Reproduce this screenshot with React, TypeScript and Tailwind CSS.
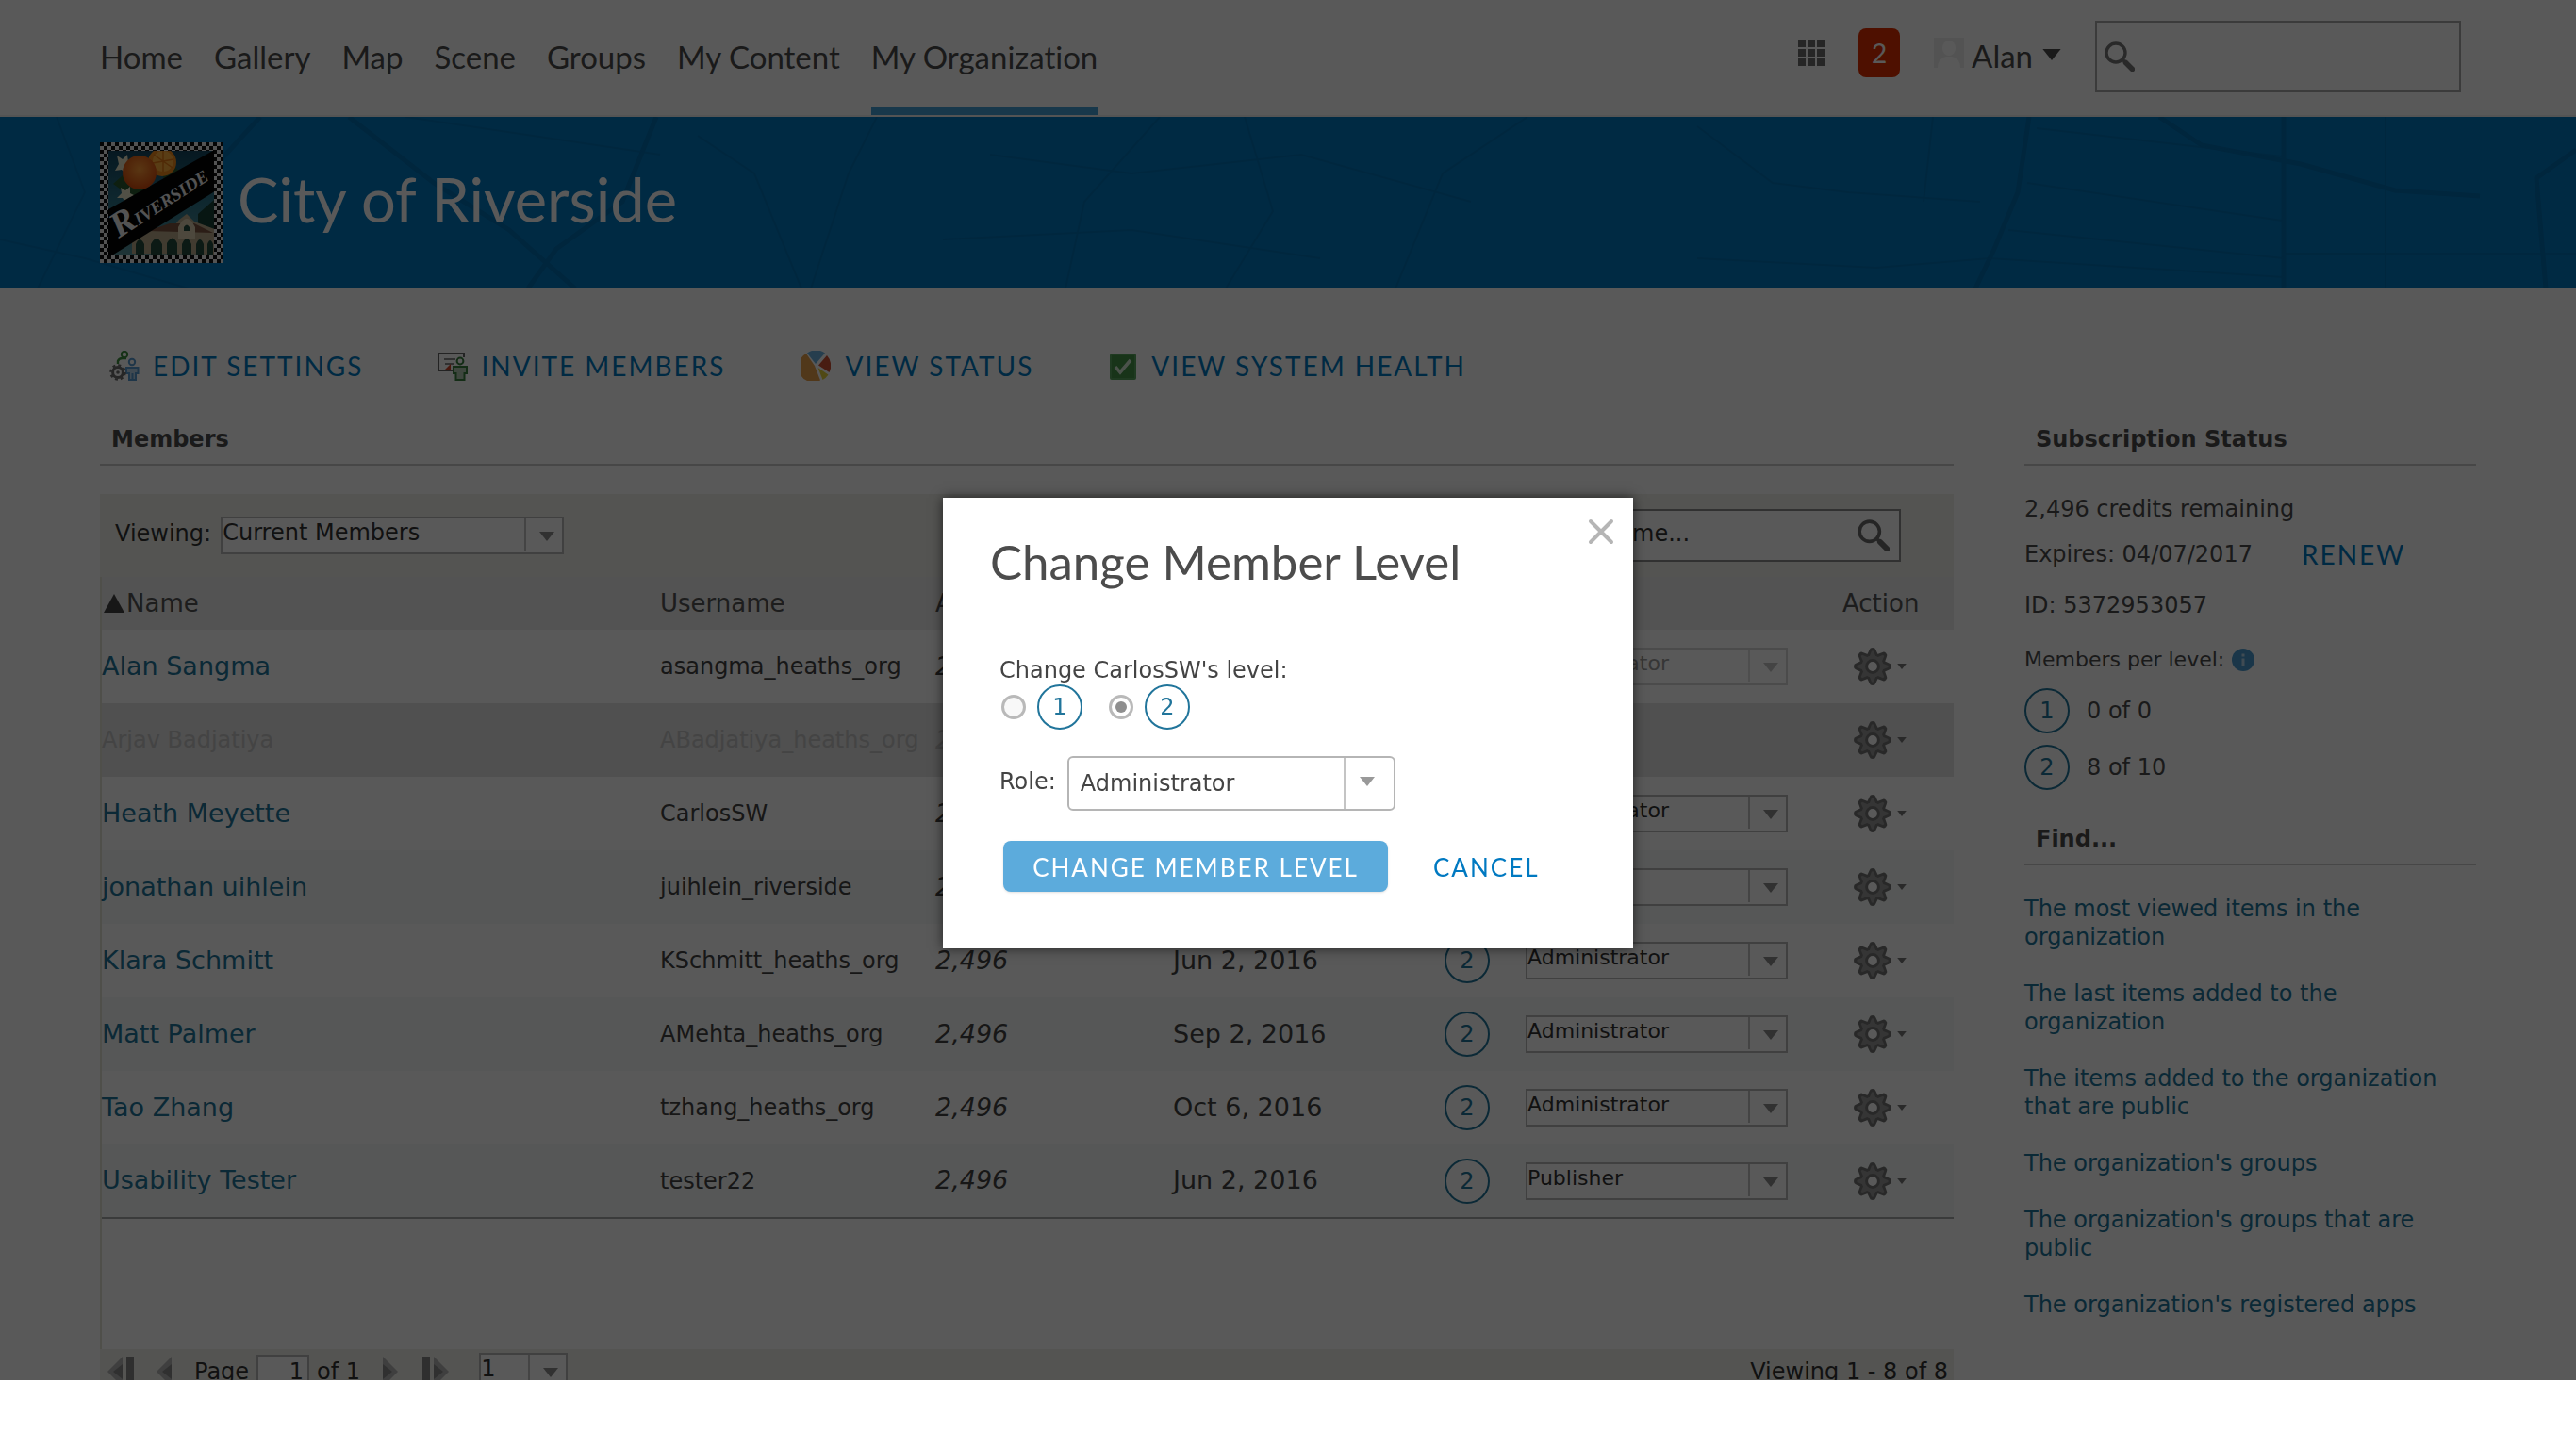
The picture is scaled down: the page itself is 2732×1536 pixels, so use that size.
import React from "react";

const navItems = ["Home", "Gallery", "Map", "Scene", "Groups", "My Content", "My Organization"];

type Member = {
  name: string;
  username: string;
  date?: string;
  level?: number;
  role?: string;
  state?: "locked" | "disabled";
};

const members: Member[] = [
  { name: "Alan Sangma", username: "asangma_heaths_org", role: "Administrator", state: "locked" },
  { name: "Arjav Badjatiya", username: "ABadjatiya_heaths_org", state: "disabled" },
  { name: "Heath Meyette", username: "CarlosSW", role: "Administrator" },
  { name: "jonathan uihlein", username: "juihlein_riverside", role: "User" },
  { name: "Klara Schmitt", username: "KSchmitt_heaths_org", date: "Jun 2, 2016", level: 2, role: "Administrator" },
  { name: "Matt Palmer", username: "AMehta_heaths_org", date: "Sep 2, 2016", level: 2, role: "Administrator" },
  { name: "Tao Zhang", username: "tzhang_heaths_org", date: "Oct 6, 2016", level: 2, role: "Administrator" },
  { name: "Usability Tester", username: "tester22", date: "Jun 2, 2016", level: 2, role: "Publisher" },
];

const findLinks = [
  "The most viewed items in the organization",
  "The last items added to the organization",
  "The items added to the organization that are public",
  "The organization's groups",
  "The organization's groups that are public",
  "The organization's registered apps",
];

function Magnifier({ className }: { className: string }) {
  return (
    <svg viewBox="0 0 32 32" className={className} fill="none" stroke="currentColor" aria-hidden="true">
      <circle cx="12" cy="12" r="10" strokeWidth="3.4" />
      <path d="M19.5 19.5 22 22" strokeWidth="3.4" />
      <path d="M22.5 22.5 29.5 29.5" strokeWidth="5.5" strokeLinecap="round" />
    </svg>
  );
}

const gearAngles = [0, 45, 90, 135, 180, 225, 270, 315];

function Gear() {
  return (
    <svg viewBox="-20 -20 40 40" className="size-10" aria-hidden="true">
      <g fill="#747474">
        {gearAngles.map((a) => (
          <path key={a} d="M-6.500 -11 -3.200 -18Q-2.800 -20 0 -20Q2.800 -20 3.200 -18L6.500 -11Z" transform={`rotate(${a})`} />
        ))}
        <circle r="14" />
      </g>
      <g fill="#989898">
        {gearAngles.map((a) => (
          <path key={a} d="M-3.500 -10 -1 -16.500H1L3.500 -10Z" transform={`rotate(${a})`} />
        ))}
        <circle r="11.500" />
      </g>
      <circle r="6.400" fill="#fff" stroke="#747474" strokeWidth="3" />
    </svg>
  );
}

function Caret({ className }: { className: string }) {
  return (
    <svg viewBox="0 0 16 10" className={className} fill="currentColor" aria-hidden="true">
      <path d="M0 0H16L8 10Z" />
    </svg>
  );
}

function LevelCircle({ level }: { level: number }) {
  return (
    <span className="flex size-12 shrink-0 items-center justify-center rounded-full border-2 border-[#21759b] bg-white text-2xl leading-none text-[#21759b]">
      {level}
    </span>
  );
}

function SmallSelect({
  label,
  options,
  width,
  text = "text-2xl",
  disabled = false,
}: {
  label: string;
  options: string[];
  width: string;
  text?: string;
  disabled?: boolean;
}) {
  return (
    <span className={`relative inline-flex h-10 ${width}`}>
      <select
        aria-label={label}
        disabled={disabled}
        className={`h-10 w-full appearance-none rounded-none border-2 bg-white pb-1.5 leading-7 opacity-100 ${text} ${
          disabled ? "border-[#d8d8d8] text-[#9a9a9a]" : "border-[#b8b8b8] text-[#333]"
        }`}
      >
        {options.map((o) => (
          <option key={o}>{o}</option>
        ))}
      </select>
      <span
        className={`pointer-events-none absolute top-0.5 right-0.5 bottom-1 flex w-10 items-center justify-center border-l-2 pt-1 pl-1.5 ${
          disabled ? "border-[#dedede] text-[#c4c4c4]" : "border-[#c4c4c4] text-[#8c8c8c]"
        }`}
      >
        <Caret className="h-2.5 w-4" />
      </span>
    </span>
  );
}

function Logo() {
  return (
    <svg viewBox="0 0 130 128" className="h-32 w-[130px] shrink-0" role="img" aria-label="Riverside">
      <defs>
        <pattern id="checks" width="8" height="8" patternUnits="userSpaceOnUse">
          <rect width="8" height="8" fill="#eee" />
          <rect width="4" height="4" fill="#111" />
          <rect x="4" y="4" width="4" height="4" fill="#111" />
        </pattern>
        <radialGradient id="orange" cx="0.5" cy="0.4" r="0.6">
          <stop offset="0" stopColor="#ff9c38" />
          <stop offset="1" stopColor="#d64a0c" />
        </radialGradient>
        <linearGradient id="sky" x1="0" y1="0" x2="0" y2="1">
          <stop offset="0" stopColor="#0f3f58" />
          <stop offset="0.5" stopColor="#2b7388" />
          <stop offset="1" stopColor="#5f9aa0" />
        </linearGradient>
        <clipPath id="inside">
          <rect x="9" y="9" width="112" height="110" />
        </clipPath>
      </defs>
      <rect width="130" height="128" fill="url(#checks)" />
      <g clipPath="url(#inside)">
        <rect width="130" height="128" fill="url(#sky)" />
        <path d="M14 44 32 28 52 50 36 60ZM60 8 88 34 70 48Z" fill="#28592f" />
        <path d="M18 14l6 4 5-5 1 8 7 3-7 3-2 7-5-5-7 1 4-7ZM22 48l5 3 5-4 0 7 6 3-8 2-2 6-4-6-6 0 5-5Z" fill="#e9e6c8" />
        <path d="M104 76 122 60V110H104Z" fill="#153f35" />
        <path d="M34 118V102L50 92H76L84 82 92 76 100 84 122 92V119Z" fill="#b9a98b" />
        <path d="M50 94 74 86 100 86 120 96Z" fill="#7d5440" />
        <path d="M83 102V90Q92 72 101 90V102Z" fill="#dccfb0" />
        <path d="M38 119V108Q42 98 47 108V119ZM54 119V108Q60 96 66 108V119ZM71 119V107Q77 96 82 107V119ZM87 119V108Q92 96 97 108V119ZM102 119V108Q106 98 110 108V119ZM114 119V108Q117 100 120 108V119ZM89 94V90Q92 85 95 90V94Z" fill="#234c3c" />
        <path d="M0 76 125 6V50L0 128Z" fill="#050505" />
        <circle cx="66" cy="21" r="15" fill="#f08a1c" />
        <circle cx="67" cy="20" r="11" fill="#ffae3d" />
        <path d="M57 13 77 27M67 9V31M56 22 78 18" stroke="#e57a14" strokeWidth="1.5" />
        <circle cx="42" cy="32" r="18" fill="url(#orange)" />
      </g>
      <text x="0" y="0" transform="translate(20 102) rotate(-33)" fill="#ededed" fontFamily="Liberation Serif, serif" fontStyle="italic" fontWeight="bold">
        <tspan fontSize="38">R</tspan>
        <tspan fontSize="19">IVERSIDE</tspan>
      </text>
    </svg>
  );
}

function BannerMap() {
  return (
    <svg className="absolute inset-0 size-full" viewBox="0 0 2732 182" preserveAspectRatio="none" fill="none" stroke="#006dae" aria-hidden="true">
      <g strokeWidth="5">
        <path d="M276 0 230 50M370 0 460 70 540 120 610 182M696 0 660 90 590 140 560 182M2152 0 2140 80 2115 140 2095 182" />
        <path d="M2290 0 2335 30 2440 50 2540 78 2630 84M2732 35 2690 65 2700 182M2422 0V182" />
      </g>
      <g strokeWidth="2" opacity="0.7">
        <path d="M740 20 800 60 850 182M930 0 900 60 860 182M1050 40 1200 60 1380 40 1560 90M1130 182 1150 90 1230 0M1320 0 1350 100 1300 182" />
        <path d="M1480 182 1530 60 1620 0M1800 10 1880 70 1960 80 2100 90M1800 150 1990 160 2110 150 2422 170M2050 0 2040 90M2160 12 2420 42M2150 70 2420 110M2130 120 2422 150" />
        <path d="M0 130 90 150 200 182M60 0 90 80 40 182M430 0 700 40M1000 130 1200 120 1400 150M2530 0V182M2422 145H2732" />
      </g>
    </svg>
  );
}

function SettingsIcon() {
  return (
    <svg viewBox="0 0 32 32" className="size-8" fill="none" aria-hidden="true">
      <circle cx="16" cy="4" r="3.2" stroke="#3f8f3f" strokeWidth="2" />
      <path d="M9 14V11Q10 8 14 8H18" stroke="#3f8f3f" strokeWidth="2.4" />
      <circle cx="24" cy="12" r="3.2" stroke="#5b9bd0" strokeWidth="2" />
      <path d="M18 24V18H30.5V24H28V31H21V24ZM24.5 24V31" stroke="#5b9bd0" strokeWidth="2" fill="#b8d3ea" />
      <circle cx="9" cy="23" r="5.4" stroke="#6e6e6e" strokeWidth="3" />
      <circle cx="9" cy="23" r="7.6" stroke="#6e6e6e" strokeWidth="2.4" strokeDasharray="3 2.97" />
      <circle cx="9" cy="23" r="1.8" fill="#6e6e6e" />
    </svg>
  );
}

function InviteIcon() {
  return (
    <svg viewBox="0 0 32 32" className="size-8" fill="none" aria-hidden="true">
      <path d="M1 3H28V7M1 2V21H16" stroke="#666" strokeWidth="2" />
      <path d="M7 9H19M8 14H17" stroke="#8a8a8a" strokeWidth="2" />
      <path d="M8 20 14 14V20Z" fill="#d0452a" />
      <circle cx="24" cy="11" r="3.4" stroke="#3b8040" strokeWidth="2" />
      <path d="M17 24V17H31V24H28.500V31H19.500V24Z" stroke="#3b8040" strokeWidth="2" fill="#b4ccb4" />
    </svg>
  );
}

function StatusIcon() {
  return (
    <svg viewBox="0 0 32 32" className="size-8" aria-hidden="true">
      <path d="M15 16 21 31.500A16 16 0 0 1 6 3Z" fill="#e8a04c" />
      <path d="M16 14 7 2.500A16 16 0 0 1 26 2.500Z" fill="#6db3e0" />
      <path d="M19 15.500 28 5A16 16 0 0 1 30.500 23Z" fill="#cf5034" />
      <path d="M18.500 18 29.500 25.500A16 16 0 0 1 23.500 31Z" fill="#e6d23c" />
    </svg>
  );
}

function HealthIcon() {
  return (
    <svg viewBox="0 0 32 32" className="size-8" fill="none" aria-hidden="true">
      <rect x="2" y="3" width="28" height="28" rx="2" fill="#5ba75e" />
      <rect x="4" y="5" width="24" height="24" fill="#469449" />
      <path d="M8 17 13 23 24 10" stroke="#d8ead8" strokeWidth="3.500" />
    </svg>
  );
}

const actions = [
  { label: "EDIT SETTINGS", icon: <SettingsIcon />, gap: "gap-3.5" },
  { label: "INVITE MEMBERS", icon: <InviteIcon />, gap: "gap-3.5" },
  { label: "VIEW STATUS", icon: <StatusIcon />, gap: "gap-4" },
  { label: "VIEW SYSTEM HEALTH", icon: <HealthIcon />, gap: "gap-3.5" },
];

function PageArrow({ label, last = false, flip = false }: { label: string; last?: boolean; flip?: boolean }) {
  return (
    <button type="button" aria-label={label} className={flip ? "rotate-180" : ""}>
      <svg viewBox={last ? "0 0 28 32" : "0 0 16 32"} className={last ? "h-8 w-7" : "h-8 w-4"} aria-hidden="true">
        {last && <rect x="0" y="0" width="8" height="32" fill="#888" />}
        <path d={last ? "M12 0 28 16 12 32Z" : "M0 0 16 16 0 32Z"} fill="#b4b4b4" />
        <path d={last ? "M12 8 22 16 12 24Z" : "M0 8 10 16 0 24Z"} fill="#8a8a8a" />
      </svg>
    </button>
  );
}

function Header() {
  return (
    <header className="flex h-[124px] items-start border-b-2 border-[#efefef] pr-[122px] pl-[106px] font-[Lato,sans-serif]">
      <nav className="flex gap-[33px]">
        {navItems.map((item) => (
          <a
            key={item}
            href="#"
            className={`flex h-[122px] items-center border-b-8 text-[33px] ${
              item === "My Organization" ? "border-[#46a0d8]" : "border-transparent"
            }`}
          >
            <span className="pt-2">{item}</span>
          </a>
        ))}
      </nav>
      <div className="ml-auto flex h-[120px] items-center">
        <button type="button" aria-label="Apps" className="mr-9 mb-2">
          <svg viewBox="0 0 28 28" className="size-7" fill="#6e6e6e" aria-hidden="true">
            {[0, 10, 20].map((y) => [0, 10, 20].map((x) => <rect key={`${x}-${y}`} x={x} y={y} width="8" height="8" />))}
          </svg>
        </button>
        <button type="button" className="mr-9 mb-2 flex h-[52px] w-11 items-center justify-center rounded-lg bg-[#e03000] text-[28px] text-white">
          2
        </button>
        <button type="button" className="mr-9 flex items-center text-[33px]">
          <svg viewBox="0 0 32 32" className="mr-2 mb-2 size-8" aria-hidden="true">
            <rect width="32" height="32" fill="#eee" />
            <ellipse cx="16" cy="11" rx="7" ry="8" fill="#fff" />
            <path d="M4 32Q4 22 13 20H19Q28 22 28 32Z" fill="#fff" />
          </svg>
          Alan
          <Caret className="mb-1 ml-2.5 h-3 w-5" />
        </button>
        <label className="flex h-[76px] w-[388px] items-center gap-2 border-2 border-[#a8a8a8] bg-white px-2 text-[#777]">
          <Magnifier className="size-8 shrink-0" />
          <input type="search" aria-label="Search" className="min-w-0 flex-1 bg-transparent text-[28px] outline-none" />
        </label>
      </div>
    </header>
  );
}

function MembersPanel() {
  return (
    <main className="flex min-w-0 flex-1 flex-col">
      <h2 className="border-b-2 border-[#cacaca] px-3 pb-[11px] text-2xl leading-[30px] font-bold">Members</h2>
      <section className="mt-[30px] flex flex-col">
        <div className="flex h-[88px] items-center bg-[#f0f0ea] pr-14 pl-4 text-[#333]">
          <span className="pb-1 text-2xl">Viewing:</span>
          <span className="ml-2.5 flex">
            <SmallSelect label="Viewing" options={["Current Members"]} width="w-[364px]" />
          </span>
          <label className="ml-auto flex h-14 w-[454px] items-center border-2 border-[#8e8e8e] bg-white px-2.5">
            <input
              type="text"
              aria-label="Search by name"
              placeholder="Search by name..."
              className="min-w-0 flex-1 bg-transparent pb-1 text-2xl outline-none placeholder:text-[#333] placeholder:opacity-100"
            />
            <Magnifier className="size-[34px] text-[#6c6c6c]" />
          </label>
        </div>
        <div className="border-l-2 border-[#e3e2d3] bg-white pb-[138px]">
          <table className="w-full table-fixed border-collapse border-b-2 border-[#a6aaa8] text-left">
            <colgroup>
              <col />
              <col className="w-[292px]" />
              <col className="w-[252px]" />
              <col className="w-[288px]" />
              <col className="w-[86px]" />
              <col className="w-[336px]" />
              <col className="w-[118px]" />
            </colgroup>
            <thead>
              <tr className="h-14 bg-[#ededed] text-[26px] text-[#555]">
                <th className="font-normal">
                  <span className="flex items-center gap-0.5">
                    <svg viewBox="0 0 22 20" className="ml-0.5 h-5 w-[22px]" fill="#444" aria-hidden="true">
                      <path d="M11 0 22 20H0Z" />
                    </svg>
                    Name
                  </span>
                </th>
                <th className="font-normal">Username</th>
                <th className="font-normal">Available</th>
                <th className="font-normal" aria-label="Date" />
                <th className="font-normal" aria-label="Level" />
                <th className="font-normal" aria-label="Role" />
                <th className="font-normal">Action</th>
              </tr>
            </thead>
            <tbody>
              {members.map((m, i) => {
                const off = m.state === "disabled";
                const bg = off ? "bg-[#e4e4e4] text-[#c2c2c2]" : i % 2 === 1 ? "bg-[#f6faf8] text-[#444]" : "bg-white text-[#444]";
                return (
                  <tr key={m.name} className={`h-[78px] ${bg}`}>
                    <td className={off ? "text-2xl" : "text-[27px]"}>
                      <a href="#" className={off ? "" : "text-[#21759b]"}>
                        {m.name}
                      </a>
                    </td>
                    <td className="text-2xl whitespace-nowrap">{m.username}</td>
                    <td className="text-[27px] italic">2,496</td>
                    <td className="text-[27px]">{m.date}</td>
                    <td>{m.level && <LevelCircle level={m.level} />}</td>
                    <td>
                      {m.role && (
                        <span className="flex">
                          <SmallSelect
                            label={`Role of ${m.name}`}
                            options={[m.role]}
                            width="w-[278px]"
                            text="text-[22px]"
                            disabled={m.state === "locked"}
                          />
                        </span>
                      )}
                    </td>
                    <td className="pl-3">
                      <button type="button" aria-label={`Actions for ${m.name}`} className="flex items-center gap-1.5 text-[#777]">
                        <Gear />
                        <Caret className="h-1.5 w-2.5" />
                      </button>
                    </td>
                  </tr>
                );
              })}
            </tbody>
          </table>
        </div>
        <div className="flex h-12 items-center bg-[#f0f0ea] pr-1.5 pl-2 text-2xl text-[#333]">
          <PageArrow label="First page" last flip />
          <span className="ml-6 flex">
            <PageArrow label="Previous page" flip />
          </span>
          <label className="ml-6 flex items-center gap-2">
            Page
            <input type="text" defaultValue="1" className="h-9 w-14 border-2 border-[#b8b8b8] bg-white pr-1 text-right outline-none" />
          </label>
          <span className="ml-2">of 1</span>
          <span className="ml-6 flex gap-[26px]">
            <PageArrow label="Next page" />
            <PageArrow label="Last page" last />
          </span>
          <span className="ml-8 flex">
            <SmallSelect label="Go to page" options={["1"]} width="w-[94px]" />
          </span>
          <span className="ml-auto">Viewing 1 - 8 of 8</span>
        </div>
      </section>
    </main>
  );
}

function Sidebar() {
  return (
    <aside className="w-[479px] shrink-0 text-2xl text-[#4c4c4c]">
      <h2 className="border-b-2 border-[#cacaca] px-3 pb-[11px] leading-[30px] font-bold">Subscription Status</h2>
      <p className="mt-[30px] leading-8">2,496 credits remaining</p>
      <p className="mt-4 flex items-center leading-8">
        Expires: 04/07/2017
        <a href="#" className="ml-[52px] font-[Lato,sans-serif] text-[28px] tracking-[2px] text-[#0079c1]">
          RENEW
        </a>
      </p>
      <p className="mt-[22px] leading-8">ID: 5372953057</p>
      <p className="mt-[26px] flex items-center gap-2 text-[22px] leading-8">
        Members per level:
        <svg viewBox="0 0 24 24" className="size-6" aria-hidden="true">
          <circle cx="12" cy="12" r="12" fill="#4a9bd0" />
          <path d="M12 5.500V8.500M12 10.500V18.500" stroke="#b8d8ee" strokeWidth="3" />
        </svg>
      </p>
      <p className="mt-[14px] flex items-center gap-[18px]">
        <LevelCircle level={1} />0 of 0
      </p>
      <p className="mt-3 flex items-center gap-[18px]">
        <LevelCircle level={2} />8 of 10
      </p>
      <h2 className="mt-[37px] border-b-2 border-[#cacaca] px-3 pb-[11px] leading-[30px] font-bold">Find...</h2>
      <ul className="mt-[31px] flex flex-col gap-[30px] leading-[30px] text-[#21759b]">
        {findLinks.map((l) => (
          <li key={l}>
            <a href="#">{l}</a>
          </li>
        ))}
      </ul>
    </aside>
  );
}

function Radio({ level, checked = false }: { level: number; checked?: boolean }) {
  return (
    <label className="flex items-center gap-3">
      <input
        type="radio"
        name="level"
        aria-label={`Level ${level}`}
        defaultChecked={checked}
        className="size-[26px] appearance-none rounded-full border-[3px] border-[#b9b9b9] bg-[#f8f8f8] p-1 checked:bg-[#8f8f8f] checked:bg-clip-content"
      />
      <LevelCircle level={level} />
    </label>
  );
}

function Dialog() {
  return (
    <div className="fixed inset-0 flex items-center justify-center pb-0.5">
      <form
        role="dialog"
        aria-labelledby="dialog-title"
        className="relative w-[732px] bg-white pt-[38px] pb-[60px] pl-[50px] text-2xl text-[#444] shadow-[0_0_12px_rgba(0,0,0,0.6)]"
      >
        <button type="button" aria-label="Close" className="absolute top-[22px] right-5 text-[#b5b5b5]">
          <svg viewBox="0 0 28 28" className="size-7" fill="none" stroke="currentColor" strokeWidth="4" strokeLinecap="round" aria-hidden="true">
            <path d="M3 3 25 25M25 3 3 25" />
          </svg>
        </button>
        <h1 id="dialog-title" className="font-[Lato,sans-serif] text-[51px] leading-[60px] text-[#4c4c4c]">
          Change Member Level
        </h1>
        <div className="mt-[70px] pl-2.5">
          <p className="leading-[30px]">Change CarlosSW's level:</p>
          <div className="flex gap-7 pl-0.5">
            <Radio level={1} />
            <Radio level={2} checked />
          </div>
          <div className="mt-7 flex items-center gap-3">
            <label htmlFor="role" className="pb-1">
              Role:
            </label>
            <span className="relative flex">
              <select id="role" className="h-[58px] w-[348px] appearance-none rounded-md border-2 border-[#b5b5b5] bg-white px-3 text-2xl">
                <option>Administrator</option>
              </select>
              <span className="pointer-events-none absolute inset-y-0.5 right-0.5 flex w-[53px] items-center justify-center border-l-2 border-[#c4c4c4] pr-1 pb-1 text-[#999]">
                <Caret className="h-2.5 w-4" />
              </span>
            </span>
          </div>
          <div className="mt-8 flex items-center font-[Lato,sans-serif] text-[26px]">
            <button type="submit" className="ml-1 h-[54px] w-[408px] rounded-lg bg-[#5cabdc] pt-0.5 tracking-[2px] text-white shadow">
              CHANGE MEMBER LEVEL
            </button>
            <button type="button" className="ml-12 pt-0.5 tracking-[2px] text-[#0079c1]">
              CANCEL
            </button>
          </div>
        </div>
      </form>
    </div>
  );
}

export default function App() {
  return (
    <div className="h-screen bg-white pb-[72px] font-[DejaVu_Sans,sans-serif] text-[#4c4c4c] [font-variant-ligatures:none]">
      <div className="relative h-full overflow-hidden">
        <Header />
        <div className="relative flex h-[182px] items-center bg-[#0079c1] px-[106px]">
          <BannerMap />
          <div className="relative flex items-center gap-4">
            <Logo />
            <span className="pb-2 font-[Lato,sans-serif] text-[65px] leading-none text-white">City of Riverside</span>
          </div>
        </div>
        <div className="flex gap-[79px] px-[116px] pt-[58px] font-[Lato,sans-serif] text-[28px] text-[#0079c1]">
          {actions.map((a) => (
            <a key={a.label} href="#" className={`flex h-12 items-center tracking-[2px] ${a.gap}`}>
              {a.icon}
              {a.label}
            </a>
          ))}
        </div>
        <div className="flex gap-[75px] px-[106px] pt-[39px]">
          <MembersPanel />
          <Sidebar />
        </div>
        <div className="absolute inset-0 bg-black/65" />
      </div>
      <Dialog />
    </div>
  );
}
